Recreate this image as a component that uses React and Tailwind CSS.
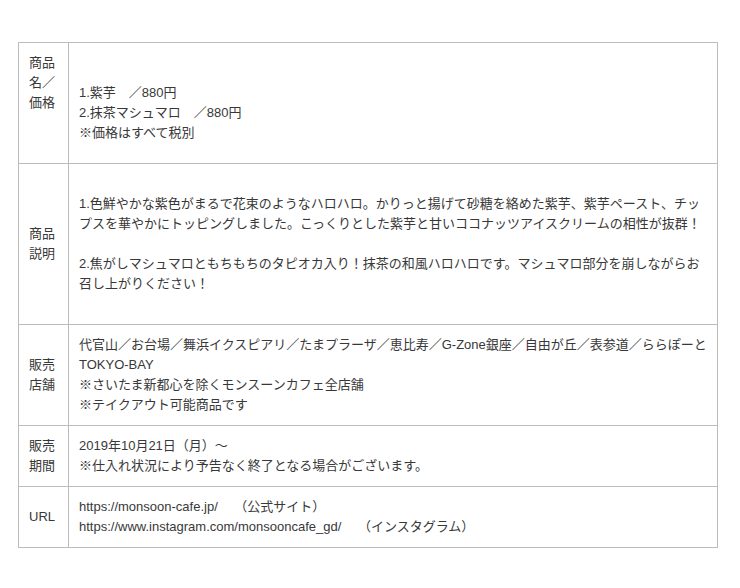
import React from 'react';

const rows = [
  {
    label: ['商品', '名／', '価格', '', ''],
    labelAlign: 'align-top',
    lines: ['', '1.紫芋\u3000／880円', '2.抹茶マシュマロ\u3000／880円', '※価格はすべて税別'],
  },
  {
    label: ['商品', '説明'],
    lines: [
      '',
      '1.色鮮やかな紫色がまるで花束のようなハロハロ。かりっと揚げて砂糖を絡めた紫芋、紫芋ペースト、チッ',
      'プスを華やかにトッピングしました。こっくりとした紫芋と甘いココナッツアイスクリームの相性が抜群！',
      '',
      '2.焦がしマシュマロともちもちのタピオカ入り！抹茶の和風ハロハロです。マシュマロ部分を崩しながらお',
      '召し上がりください！',
      '',
    ],
  },
  {
    label: ['販売', '店舗'],
    lines: [
      '代官山／お台場／舞浜イクスピアリ／たまプラーザ／恵比寿／G-Zone銀座／自由が丘／表参道／ららぽーと',
      'TOKYO-BAY',
      '※さいたま新都心を除くモンスーンカフェ全店舗',
      '※テイクアウト可能商品です',
    ],
  },
  {
    label: ['販売', '期間'],
    lines: ['2019年10月21日（月）～', '※仕入れ状況により予告なく終了となる場合がございます。'],
  },
  {
    label: ['URL'],
    lines: [
      'https://monsoon-cafe.jp/\u3000 （公式サイト）',
      'https://www.instagram.com/monsooncafe_gd/\u3000 （インスタグラム）',
    ],
  },
];

const Lines = ({ items }) =>
  items.map((t, i) => (
    <div key={i} className="h-5 whitespace-pre">
      {t}
    </div>
  ));

export default function App() {
  return (
    <div className="w-[740px] h-[588px] bg-white pt-[42px] pl-[18px] font-['Liberation_Sans','Noto_Sans_CJK_JP',sans-serif] text-[13px] leading-5 text-[#383838]">
      <table className="w-[700px] border-collapse border border-[#bcbcbc]">
        <tbody>
          {rows.map((r, i) => (
            <tr key={i}>
              <td
                className={`w-[50px] border border-[#bcbcbc] px-[10px] py-[10px] ${
                  r.labelAlign || 'align-middle'
                }`}
              >
                <Lines items={r.label} />
              </td>
              <td className="border border-[#bcbcbc] px-[10px] py-[10px] align-middle">
                <Lines items={r.lines} />
              </td>
            </tr>
          ))}
        </tbody>
      </table>
    </div>
  );
}
